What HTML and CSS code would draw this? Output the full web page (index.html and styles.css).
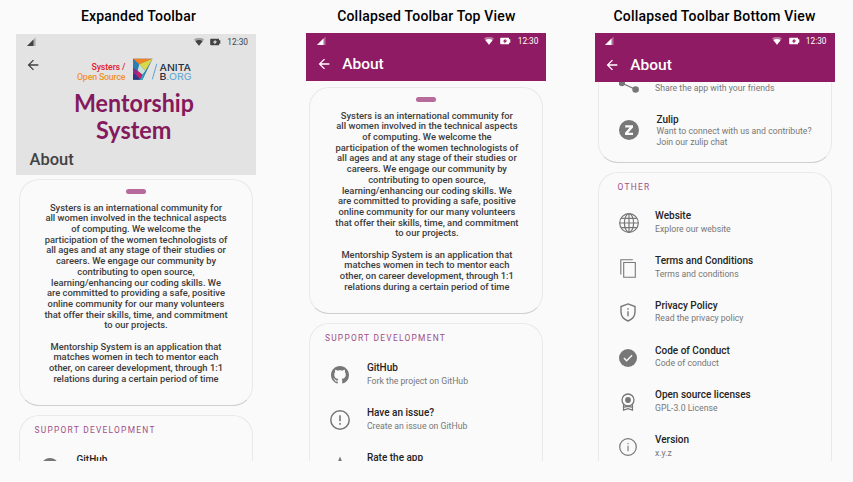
FILE: index.html
```html
<!DOCTYPE html>
<html lang="en">
<head>
<meta charset="utf-8">
<title>About screen</title>
<link rel="stylesheet" href="styles.css">
</head>
<body>
<svg class="defs" aria-hidden="true">
  <symbol id="signal" viewBox="0 0 10 10"><path d="M0 9.500 9 .5v9z" opacity=".35"/><path d="M0 9.500 6.800 2.700v6.800z"/></symbol>
  <symbol id="wifi" viewBox="0 0 24 24"><path d="M12 21 24 6C19 1.500 5 1.500 0 6z" opacity=".4"/><path d="M12 21 20.500 10C16 6.500 8 6.500 3.500 10z"/></symbol>
  <symbol id="battery" viewBox="0 0 11 8"><path fill-rule="evenodd" d="M1 .8h8v1.500h1.300v3.400H9v1.500H1a.8.8 0 0 1-.8-.8V1.600A.8.8 0 0 1 1 .8zM5.500 1.700 2.700 4.400h1.700v2l2.900-2.800H5.500z"/></symbol>
  <symbol id="back" viewBox="0 0 24 24"><path d="M20 11H7.830l5.590-5.590L12 4l-8 8 8 8 1.410-1.410L7.830 13H20z"/></symbol>
  <symbol id="github" viewBox="0 0 16 16"><path d="M8 0C3.580 0 0 3.580 0 8c0 3.540 2.290 6.530 5.470 7.590.4.070.55-.17.55-.38 0-.19-.01-.82-.01-1.490-2.010.37-2.530-.49-2.690-.94-.09-.23-.48-.94-.82-1.130-.28-.15-.68-.52-.01-.53.63-.01 1.080.58 1.230.82.72 1.210 1.870.87 2.330.66.07-.52.28-.87.51-1.070-1.780-.2-3.640-.89-3.640-3.950 0-.87.31-1.590.82-2.150-.08-.2-.36-1.020.08-2.120 0 0 .67-.21 2.200.82.64-.18 1.320-.27 2-.27s1.360.09 2 .27c1.530-1.040 2.200-.82 2.200-.82.44 1.100.16 1.920.08 2.120.51.56.82 1.270.82 2.150 0 3.070-1.870 3.750-3.650 3.950.29.25.54.73.54 1.480 0 1.070-.01 1.930-.01 2.200 0 .21.15.46.55.38A8.010 8.010 0 0 0 16 8c0-4.420-3.580-8-8-8z"/></symbol>
  <symbol id="issue" viewBox="0 0 20 20"><circle cx="10" cy="10" r="9.200" fill="none" stroke="currentColor" stroke-width="1.500"/><path d="M9.200 5.200h1.600v6H9.200zM9.200 13h1.600v1.700H9.200z"/></symbol>
  <symbol id="star" viewBox="0 0 24 24"><path d="m12 2 2.800 6.800 7.200.5-5.500 4.700 1.700 7.200L12 17.300l-6.200 3.900L7.500 14 2 9.300l7.200-.5z"/></symbol>
  <symbol id="share" viewBox="0 0 20 20"><circle cx="2.800" cy="10" r="3.200"/><circle cx="16.600" cy="16.500" r="3.300"/><circle cx="16.600" cy="3.500" r="3.300"/><path d="m16.600 16.500-13.800-6.500 13.800-6.500" fill="none" stroke="currentColor" stroke-width="1.300"/></symbol>
  <symbol id="zulip" viewBox="0 0 20 20"><circle cx="10" cy="10" r="10"/><path d="M6.200 5.300h7.800v2.100L9.300 12.700H14v2.200H6v-2.100l4.700-5.300H6.200z" fill="#fafafa"/></symbol>
  <symbol id="globe" viewBox="0 0 20 20"><g fill="none" stroke="currentColor" stroke-width="1.200"><circle cx="10" cy="10" r="9.300"/><ellipse cx="10" cy="10" rx="4.600" ry="9.300"/><path d="M10 .7v18.600M.7 10h18.600M2.300 5.300h15.400M2.300 14.700h15.400"/></g></symbol>
  <symbol id="copy" viewBox="0 0 16 19"><path fill="none" stroke="currentColor" d="M.8 15.500V.8h12M3.700 3.500h11.600v14.700H3.700z" stroke-width="1.100"/></symbol>
  <symbol id="shield" viewBox="0 0 16 19"><path d="M8 .9 15 3.500v5.300c0 4.300-2.800 7.600-7 9.200-4.200-1.600-7-4.900-7-9.200V3.500z" fill="none" stroke="currentColor" stroke-width="1.400"/><path d="M7.300 5.300h1.400v1.400H7.300zM7.300 8.200h1.400v5H7.300z"/></symbol>
  <symbol id="check" viewBox="0 0 18 18"><circle cx="9" cy="9" r="9"/><path d="m4.900 9.100 2.700 2.700 5.500-5.500" fill="none" stroke="#fafafa" stroke-width="1.400"/></symbol>
  <symbol id="license" viewBox="0 0 14 18"><circle cx="7" cy="7" r="6" fill="none" stroke="currentColor" stroke-width="1.300"/><circle cx="7" cy="7" r="2.900"/><path d="M2.500 11.500v5.600L7 15.700l4.500 1.400v-5.600M3 14.200l4-.8 4 .8" fill="none" stroke="currentColor" stroke-width="1.200"/></symbol>
  <symbol id="info" viewBox="0 0 18 18"><circle cx="9" cy="9" r="8.300" fill="none" stroke="currentColor" stroke-width="1.200"/><path d="M8.500 4.900h1.100v1.300H8.500zM8.500 7.700h1.100v5.600H8.500z"/></symbol>
</svg>
<main class="board">
  <section class="view expanded">
    <h2>Expanded Toolbar</h2>
    <div class="phone">
      <header>
        <div class="status"><svg class="signal"><use href="#signal"/></svg><svg class="wifi"><use href="#wifi"/></svg><svg class="battery"><use href="#battery"/></svg><span>12:30</span></div>
        <div class="brand">
          <svg class="back"><use href="#back"/></svg>
          <svg class="logo" viewBox="0 0 120 90">
            <g class="systers"><text x="19.500" y="18.200" textLength="34" fill="#e3202b">Systers /</text><text x="5" y="28.200" textLength="48.500" fill="#f0932b">Open Source</text></g>
            <g transform="translate(0 .8)"><path d="M61 6h19.500L70.500 27H61z" fill="#2b6f9f"/><path d="M61 6h19.500L67 11.500z" fill="#f58220"/><path d="m80.500 6-7 12-6.500-6.500z" fill="#d8d84a"/><path d="m67 11.500 6.500 6.500-3 4-5-4z" fill="#c7e3d5"/><path d="m61 6 6 5.500-1.500 6.500-4.500-3z" fill="#2b7fb5"/><path d="m61 15 4.500 3 2 5-3.500-1-3 2z" fill="#8c2a86"/><path d="m65.500 18 5 4-2.500 5-4-5z" fill="#c41f72"/><path d="m61 21 3 1 4 5h-7z" fill="#293984"/><path d="m73.500 18-3 9H68l2.500-5z" fill="#2ba3be"/>
            <path d="m84.800 11-4.500 15.500" stroke="#58a5d2" stroke-width="1"/></g>
            <g class="anita"><text x="87.500" y="19.200" textLength="31.500" lengthAdjust="spacingAndGlyphs">ANITA</text><text x="87.500" y="27.900" textLength="32" lengthAdjust="spacingAndGlyphs">B<tspan class="org">.ORG</tspan></text></g>
            <g class="product"><text x="2" y="59.500" textLength="120" lengthAdjust="spacingAndGlyphs">Mentorship</text><text x="24" y="86.500" textLength="75.500" lengthAdjust="spacingAndGlyphs">System</text></g>
          </svg>
        </div>
        <h1>About</h1>
      </header>
      <article class="card intro"><i class="handle"></i>
        <p>Systers is an international community for<br>all women involved in the technical aspects<br>of computing. We welcome the<br>participation of the women technologists of<br>all ages and at any stage of their studies or<br>careers. We engage our community by<br>contributing to open source,<br>learning/enhancing our coding skills. We<br>are committed to providing a safe, positive<br>online community for our many volunteers<br>that offer their skills, time, and commitment<br>to our projects.<br><br>Mentorship System is an application that<br>matches women in tech to mentor each<br>other, on career development, through 1:1<br>relations during a certain period of time</p>
      </article>
      <article class="card list"><h3>SUPPORT DEVELOPMENT</h3>
        <div class="row"><svg class="i18"><use href="#github"/></svg><div><b>GitHub</b><small>Fork the project on GitHub</small></div></div>
      </article>
    </div>
  </section>

  <section class="view top">
    <h2>Collapsed Toolbar Top View</h2>
    <div class="phone">
      <header>
        <div class="status"><svg class="signal"><use href="#signal"/></svg><svg class="wifi"><use href="#wifi"/></svg><svg class="battery"><use href="#battery"/></svg><span>12:30</span></div>
        <div class="bar"><svg class="back"><use href="#back"/></svg><h1>About</h1></div>
      </header>
      <article class="card intro"><i class="handle"></i>
        <p>Systers is an international community for<br>all women involved in the technical aspects<br>of computing. We welcome the<br>participation of the women technologists of<br>all ages and at any stage of their studies or<br>careers. We engage our community by<br>contributing to open source,<br>learning/enhancing our coding skills. We<br>are committed to providing a safe, positive<br>online community for our many volunteers<br>that offer their skills, time, and commitment<br>to our projects.<br><br>Mentorship System is an application that<br>matches women in tech to mentor each<br>other, on career development, through 1:1<br>relations during a certain period of time</p>
      </article>
      <article class="card list"><h3>SUPPORT DEVELOPMENT</h3>
        <div class="row"><svg class="i18"><use href="#github"/></svg><div><b>GitHub</b><small>Fork the project on GitHub</small></div></div>
        <div class="row"><svg class="i20"><use href="#issue"/></svg><div><b>Have an issue?</b><small>Create an issue on GitHub</small></div></div>
        <div class="row rate"><svg class="i18"><use href="#star"/></svg><div><b>Rate the app</b></div></div>
      </article>
    </div>
  </section>

  <section class="view bottom">
    <h2>Collapsed Toolbar Bottom View</h2>
    <div class="phone">
      <header>
        <div class="status"><svg class="signal"><use href="#signal"/></svg><svg class="wifi"><use href="#wifi"/></svg><svg class="battery"><use href="#battery"/></svg><span>12:30</span></div>
        <div class="bar"><svg class="back"><use href="#back"/></svg><h1>About</h1></div>
      </header>
      <article class="card support">
        <div class="row share"><svg class="i20"><use href="#share"/></svg><div><small>Share the app with your friends</small></div></div>
        <div class="row zulip"><svg class="i20"><use href="#zulip"/></svg><div><b>Zulip</b><small>Want to connect with us and contribute?<br>Join our zulip chat</small></div></div>
      </article>
      <article class="card list"><h3>OTHER</h3>
        <div class="row"><svg class="i20"><use href="#globe"/></svg><div><b>Website</b><small>Explore our website</small></div></div>
        <div class="row"><svg class="doc"><use href="#copy"/></svg><div><b>Terms and Conditions</b><small>Terms and conditions</small></div></div>
        <div class="row"><svg class="doc"><use href="#shield"/></svg><div><b>Privacy Policy</b><small>Read the privacy policy</small></div></div>
        <div class="row"><svg class="i18"><use href="#check"/></svg><div><b>Code of Conduct</b><small>Code of conduct</small></div></div>
        <div class="row"><svg class="i18"><use href="#license"/></svg><div><b>Open source licenses</b><small>GPL-3.0 License</small></div></div>
        <div class="row"><svg class="i18"><use href="#info"/></svg><div><b>Version</b><small>x.y.z</small></div></div>
      </article>
    </div>
  </section>
</main>
</body>
</html>
```
FILE: styles.css
```css
* { box-sizing: border-box; margin: 0; padding: 0; }
body { width: 853px; height: 482px; overflow: hidden; background: #fafafa; font-family: Roboto, sans-serif; }
svg { display: block; fill: currentColor; flex: none; }
.defs { display: none; }
.board { display: grid; grid-template-columns: 240px 240px 240px; padding-left: 16px; }
.view.top { margin-left: 50.400px; width: 240px; }
.view.bottom { margin-left: 98.500px; width: 240px; }
h2 { height: 33px; margin: 0 -10px; padding: 6px 0 0 5px; font-size: 14px; letter-spacing: .2px; line-height: 20px; font-weight: 500; color: #000; text-align: center; white-space: nowrap; }
.top h2, .bottom h2 { padding-left: 0; }
.phone { height: 428px; overflow: hidden; }
header { background: #8e1b63; color: #fff; height: 48px; position: relative; z-index: 1; }
.status { display: flex; align-items: center; height: 16px; padding: 0 8px 0 10.500px; font-size: 8.300px; }
.signal { width: 9.500px; height: 9.500px; margin-right: auto; }
.wifi { width: 10px; height: 10px; margin-right: 6.500px; }
.battery { width: 11px; height: 8px; margin-right: 6.300px; }
.back { width: 16px; height: 16px; }
.bar { display: flex; align-items: center; height: 30px; padding-left: 9.300px; }
.bar h1 { margin-left: 10.500px; }
h1 { font-size: 15.500px; line-height: 20px; font-weight: 500; }
.bottom header { height: 48.500px; }
.bottom .bar { height: 31px; }

.expanded .phone { padding-top: 1px; }
.expanded header { height: 141px; background: #e3e3e3; color: #424242; }
.brand { display: flex; height: 98px; padding-left: 9px; }
.brand .back { margin-top: 7px; }
.logo { width: 120px; height: 90px; margin: 2px 0 0 31px; overflow: visible; }
.systers { font: 500 8.800px Roboto, sans-serif; }
.anita { font: 500 9.500px Inter, sans-serif; fill: #24303f; }
.org { font-weight: 400; fill: #58a5d2; }
.product { font: 700 25px Lato, sans-serif; fill: #85195d; }
.expanded h1 { padding-left: 13.500px; margin-top: 1.500px; font-size: 16.500px; }

.card { width: 234px; margin-left: 3px; border: 1px solid #e9e9e9; border-bottom-color: #cfcfcf; border-radius: 20px; }
.intro { margin-top: 6px; height: 227px; padding-top: 8.500px; }
.expanded .intro { margin-top: 4px; }
.handle { display: block; width: 20px; height: 5px; margin: 0 auto; border-radius: 2.500px; background: #b66b9c; }
.intro p { margin: 9.200px -5px 0; color: #3c3c3c; font-size: 9.370px; line-height: 10.690px; font-weight: 500; text-align: center; white-space: nowrap; }
.top .intro p { padding-left: 1px; }
.list { margin-top: 9px; height: 400px; padding-top: 8.400px; }
h3 { padding-left: 14.500px; color: #a04e87; font-size: 8.400px; line-height: 12px; font-weight: 400; letter-spacing: 1.270px; white-space: nowrap; }
.row { display: grid; grid-template-columns: 20px 1fr; column-gap: 17px; align-items: center; height: 44.750px; padding-left: 19.500px; color: #777; }
.row svg { justify-self: center; }
.row > div { margin-top: -.5px; }
.list h3 + .row { margin-top: 8px; }
.row b { display: block; color: #242424; font-size: 10px; line-height: 12.500px; font-weight: 500; }
.row small { display: block; color: #777; font-size: 8.700px; line-height: 12px; }
.row.rate > div { padding-bottom: 12px; }
.i18 { width: 18px; height: 18px; }
.i20 { width: 20px; height: 20px; }
.doc { width: 16px; height: 19px; }
.support { display: flow-root; height: 81.500px; border-top: 0; border-radius: 0 0 20px 20px; }
.bottom .row { padding-left: 20px; column-gap: 16.500px; }
.bottom .row > div { margin-top: -1.500px; }
.bottom .row svg { justify-self: start; }
.bottom .row .doc { margin-left: 1px; }
.support .share { height: 20px; margin-top: -9px; }
.bottom .support .share > div { margin-top: 9px; }
.support .zulip { margin-top: 19px; height: 36px; column-gap: 18px; }
.bottom .support .zulip > div { margin-top: 1.500px; }
.zulip small { line-height: 10.300px; }
.bottom h3 { padding-left: 19px; }
.bottom .list { margin-top: 8.500px; }
```
